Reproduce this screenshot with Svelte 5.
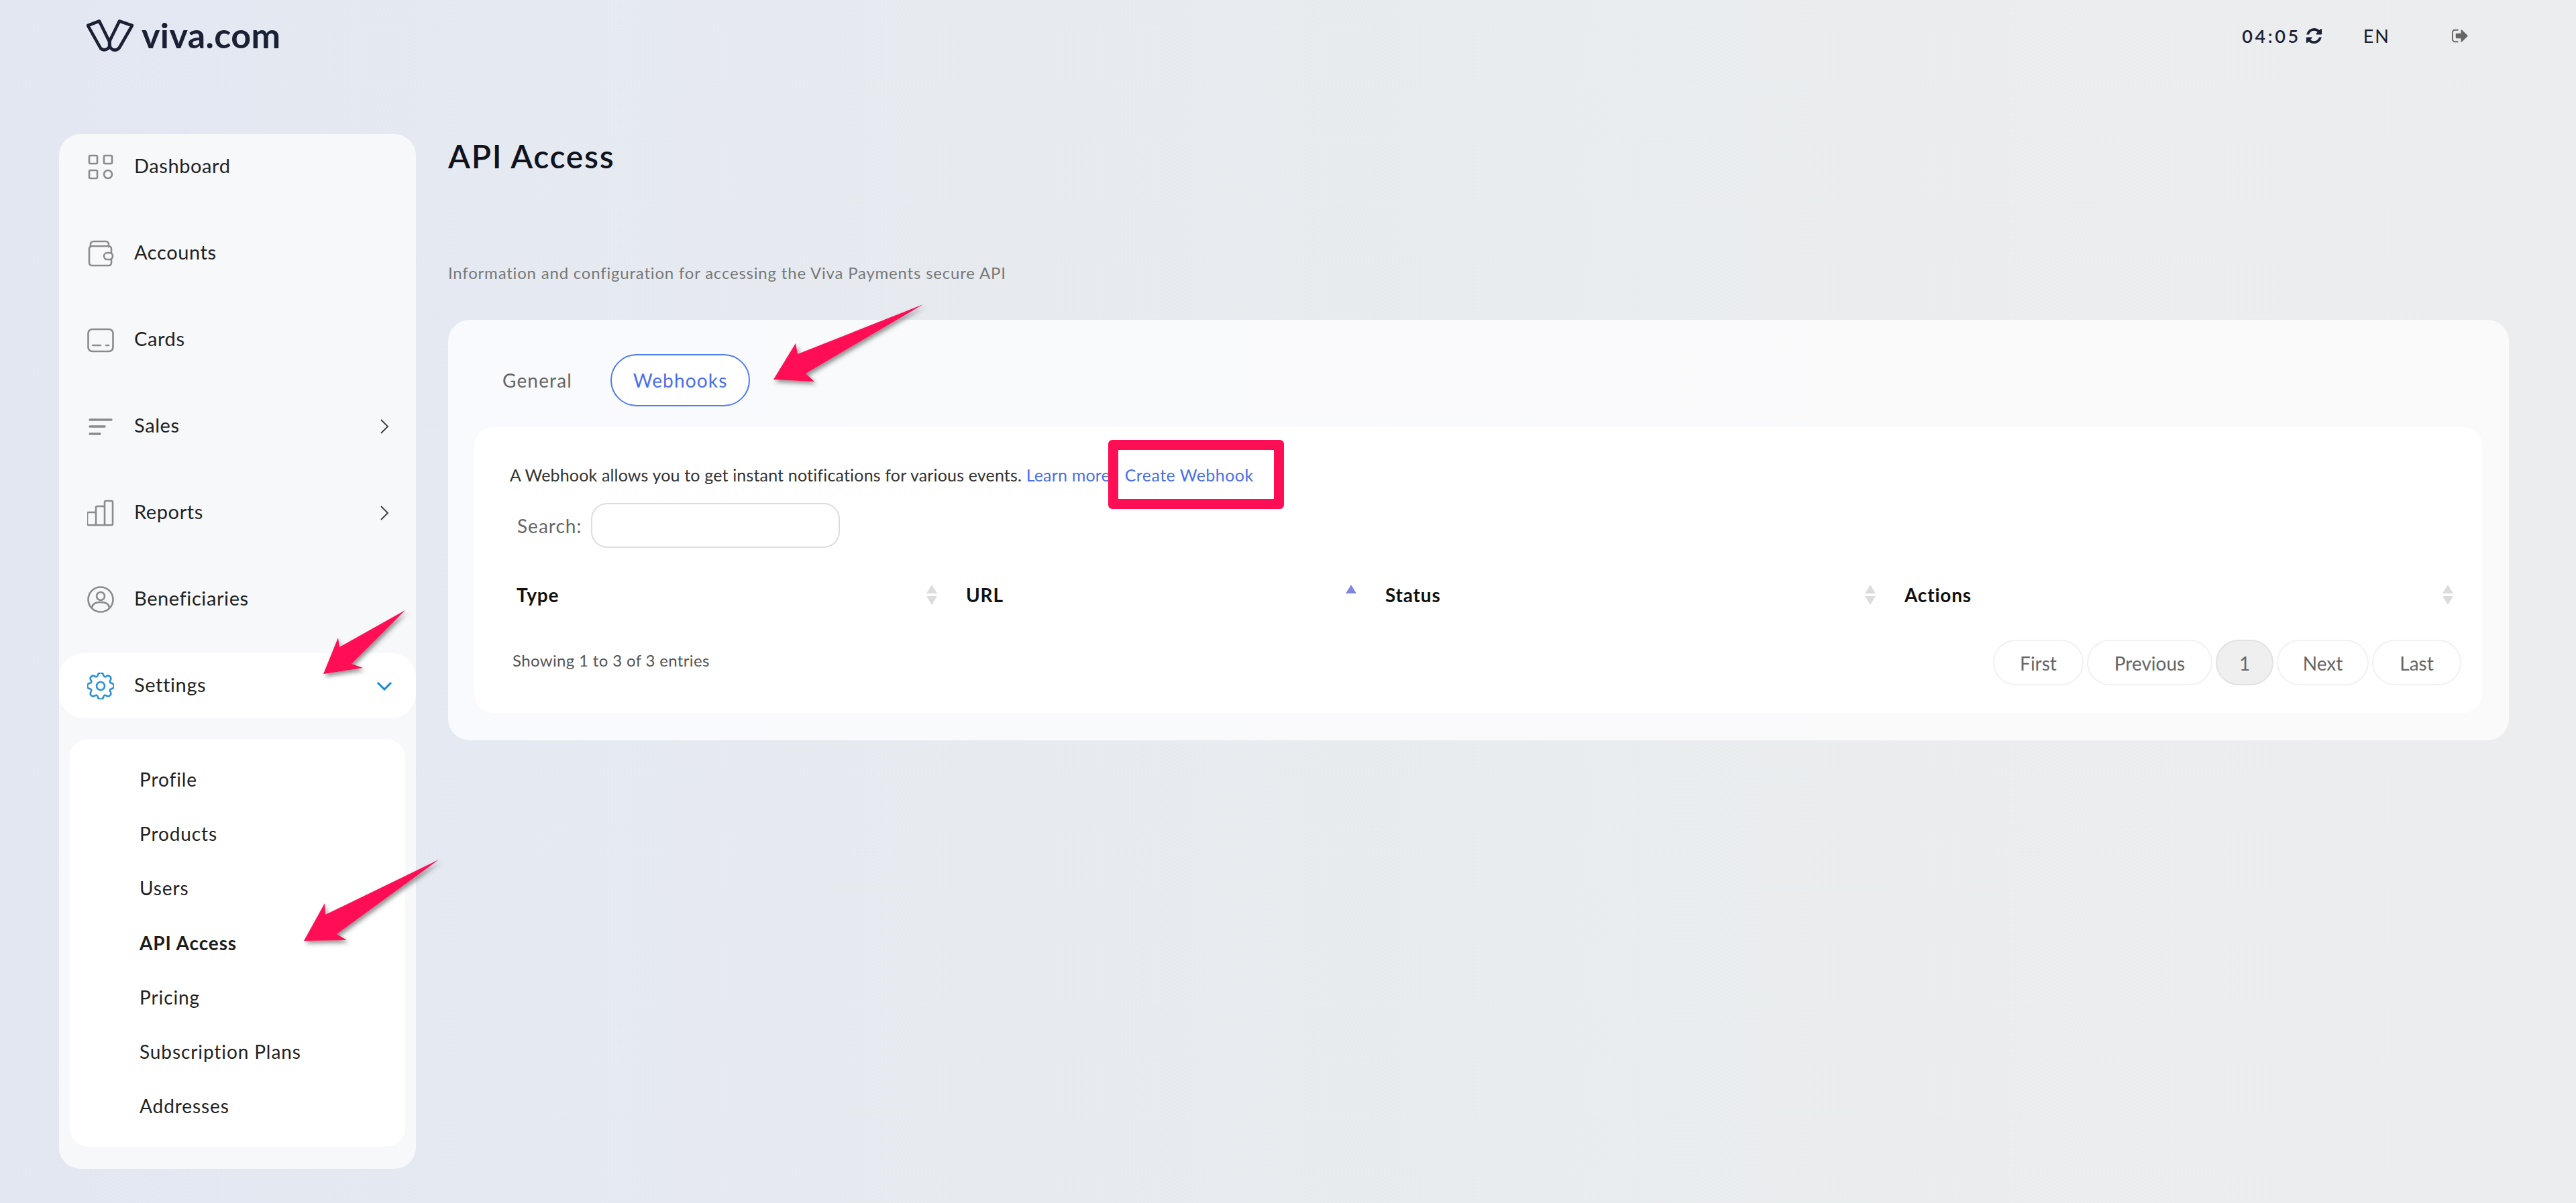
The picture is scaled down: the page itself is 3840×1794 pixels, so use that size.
<script>
  const gearPoints = [];
  const teeth = 8;
  for (let i = 0; i < teeth; i++) {
    const a = -Math.PI / 2 + (i * 2 * Math.PI) / teeth;
    const w = (9.5 * Math.PI) / 180;
    const v = Math.PI / teeth;
    [[a - w, 20.2], [a + w, 20.2], [a + v, 13.4]].forEach(([t, r]) => {
      gearPoints.push([20 + r * Math.cos(t), 20 + r * Math.sin(t)]);
    });
  }
  let gear = '';
  gearPoints.forEach((p, i) => {
    const n = gearPoints[(i + 1) % gearPoints.length];
    const nn = gearPoints[(i + 2) % gearPoints.length];
    if (i === 0) gear += `M${((p[0] + n[0]) / 2).toFixed(2)} ${((p[1] + n[1]) / 2).toFixed(2)}`;
    gear += `Q${n[0].toFixed(2)} ${n[1].toFixed(2)} ${((n[0] + nn[0]) / 2).toFixed(2)} ${((n[1] + nn[1]) / 2).toFixed(2)}`;
  });
  gear += 'Z';

  const subItems = ['Profile', 'Products', 'Users', 'API Access', 'Pricing', 'Subscription Plans', 'Addresses'];
  const columns = [
    { label: 'Type', cls: 'c1' },
    { label: 'URL', cls: 'c2', active: true },
    { label: 'Status', cls: 'c3' },
    { label: 'Actions', cls: 'c4' }
  ];
  const pages = [
    { label: 'First', w: 135 },
    { label: 'Previous', w: 187 },
    { label: '1', w: 86, current: true },
    { label: 'Next', w: 137 },
    { label: 'Last', w: 133 }
  ];
</script>

<div class="page">
  <header class="top">
    <div class="logo">
      <svg class="logo-mark" viewBox="0 0 70 48" fill="none" stroke="#1a2135" stroke-width="4.6" stroke-linejoin="round">
        <path d="M2 9 L19 2.5 L34 33 Q36 41 31 44 Q25 47 21 43 Z" />
        <path d="M49 2.5 L68 9 L49 42 Q45 47 39 45 Q32 41 35 31 Z" />
      </svg>
      <span class="logo-text">viva.com</span>
    </div>
    <div class="top-right">
      <span class="clock">04:05</span>
      <svg class="refresh" viewBox="0 0 1792 1792"><path fill="#1a2135" d="M1639 1056q0 5-1 7-64 268-268 434.5t-478 166.5q-146 0-282.5-55t-243.5-157l-129 129q-19 19-45 19t-45-19-19-45v-448q0-26 19-45t45-19h448q26 0 45 19t19 45-19 45l-137 137q71 66 161 102t187 36q134 0 250-65t186-179q11-17 53-117 8-23 30-23h192q13 0 22.5 9.5t9.5 22.5zm25-800v448q0 26-19 45t-45 19h-448q-26 0-45-19t-19-45 19-45l138-138q-148-137-349-137-134 0-250 65t-186 179q-11 17-53 117-8 23-30 23h-199q-13 0-22.5-9.5t-9.5-22.5v-7q65-268 270-434.5t480-166.5q146 0 284 55.5t245 156.5l130-129q19-19 45-19t45 19 19 45z" /></svg>
      <span class="lang">EN</span>
      <svg class="logout" viewBox="0 0 1792 1792"><path fill="#666" d="M704 1440q0 4 1 20t.5 26.5-3 23.5-10 19.5-20.5 6.5h-320q-119 0-203.5-84.5t-84.5-203.5v-704q0-119 84.5-203.5t203.5-84.5h320q13 0 22.5 9.5t9.5 22.5q0 4 1 20t.5 26.5-3 23.5-10 19.5-20.5 6.5h-320q-66 0-113 47t-47 113v704q0 66 47 113t113 47h312l11.5 1 11.5 3 8 5.5 7 9 2 13.5zm928-544q0 26-19 45l-544 544q-19 19-45 19t-45-19-19-45v-288h-448q-26 0-45-19t-19-45v-384q0-26 19-45t45-19h448v-288q0-26 19-45t45-19 45 19l544 544q19 19 19 45z" /></svg>
    </div>
  </header>

  <div class="body">
    <aside class="sidebar">
      <nav class="nav">
        <div class="row">
          <svg class="ico" viewBox="0 0 40 40"><rect x="3" y="3" width="12" height="12" rx="1.5" /><rect x="25" y="3" width="12" height="12" rx="1.5" /><rect x="3" y="25" width="12" height="12" rx="1.5" /><circle cx="31" cy="31" r="6" /></svg>
          <span class="lbl">Dashboard</span>
        </div>
        <div class="row">
          <svg class="ico" viewBox="0 0 40 40"><path d="M5 10V6a4 4 0 0 1 4-4h19a4 4 0 0 1 4 4v4" /><rect x="3" y="9" width="33" height="29" rx="4" /><rect x="25" y="19" width="13" height="10" rx="5" fill="#f6f8fa" /></svg>
          <span class="lbl">Accounts</span>
        </div>
        <div class="row">
          <svg class="ico" viewBox="0 0 40 40"><rect x="1.5" y="4" width="37" height="33" rx="6" /><path d="M8 28h12M28 28h4" /></svg>
          <span class="lbl">Cards</span>
        </div>
        <div class="row">
          <svg class="ico" viewBox="0 0 40 40"><path class="thick" d="M4 10h32M4 20h22M4 31h15" /></svg>
          <span class="lbl">Sales</span>
          <svg class="chev" viewBox="0 0 14 24"><path d="M2 2l10 10L2 22" /></svg>
        </div>
        <div class="row">
          <svg class="ico" viewBox="0 0 40 40"><path d="M0 21a2 2 0 0 1 2-2h9a2 2 0 0 1 2 2v17H2a2 2 0 0 1-2-2zM13 12a2 2 0 0 1 2-2h9a2 2 0 0 1 2 2v26H13zM26 4a2 2 0 0 1 2-2h8a2 2 0 0 1 2 2v32a2 2 0 0 1-2 2H26z" /></svg>
          <span class="lbl">Reports</span>
          <svg class="chev" viewBox="0 0 14 24"><path d="M2 2l10 10L2 22" /></svg>
        </div>
        <div class="row">
          <svg class="ico" viewBox="0 0 40 40"><circle cx="20" cy="20" r="18.5" /><circle cx="20" cy="15" r="6" /><path d="M7 32c1-6 6-8 13-8s12 2 13 8" /></svg>
          <span class="lbl">Beneficiaries</span>
        </div>
        <div class="row active">
          <svg class="ico gear" viewBox="0 0 40 40"><path d={gear} /><circle cx="20" cy="20" r="6" /></svg>
          <span class="lbl">Settings</span>
          <svg class="chev down" viewBox="0 0 24 14"><path d="M2 2l10 10L22 2" /></svg>
        </div>
      </nav>
      <ul class="sub">
        {#each subItems as item}
          <li class:current={item === 'API Access'}>{item}</li>
        {/each}
      </ul>
    </aside>

    <main class="main">
      <h1>API Access</h1>
      <p class="desc">Information and configuration for accessing the Viva Payments secure API</p>
      <section class="card">
        <div class="tabs">
          <span class="tab">General</span>
          <span class="tab pill">Webhooks</span>
        </div>
        <div class="inner">
          <p class="intro">A Webhook allows you to get instant notifications for various events. <a href="#top">Learn more</a>) <a class="create" href="#top">Create Webhook</a></p>
          <div class="search">
            <label for="q">Search:</label>
            <input id="q" type="text" />
          </div>
          <div class="thead">
            {#each columns as col}
              <div class="th {col.cls}">
                <span>{col.label}</span>
                <span class="sort" class:on={col.active}><i class="up"></i>{#if !col.active}<i class="dn"></i>{/if}</span>
              </div>
            {/each}
          </div>
          <div class="foot">
            <span class="info">Showing 1 to 3 of 3 entries</span>
            <div class="pager">
              {#each pages as p}
                <span class="pg" class:now={p.current} style="width:{p.w}px">{p.label}</span>
              {/each}
            </div>
          </div>
        </div>
      </section>
    </main>
  </div>

  <div class="redbox"></div>
  <svg class="arrows" viewBox="0 0 3840 1794">
    <defs>
      <filter id="ds" x="-20%" y="-20%" width="140%" height="140%">
        <feDropShadow dx="3" dy="4" stdDeviation="3" flood-color="#3a3a3a" flood-opacity="0.55" />
      </filter>
    </defs>
    <g fill="#ff0d55" filter="url(#ds)">
      <polygon points="1153,566 1186,512 1189,528 1376,454 1201,557 1214,569" />
      <polygon points="482,1005 504,951 506,965 604,910 524,990 541,996" />
      <polygon points="453,1403 484,1347 485,1364 654,1282 502,1393 517,1402" />
    </g>
  </svg>
</div>

<style>
  :global(body) {
    margin: 0;
  }
  .page {
    position: relative;
    width: 3840px;
    height: 1794px;
    overflow: hidden;
    background: linear-gradient(90deg, #e3e7f2 0%, #e6eaf0 30%, #e9ecee 60%, #ecedee 100%);
    font-family: Lato, "Noto Sans", sans-serif;
    color: #222;
  }
  .top {
    display: flex;
    justify-content: space-between;
    height: 106px;
    margin-bottom: 94px;
    padding: 0 159px 0 129px;
    align-items: center;
  }
  .logo {
    display: flex;
    align-items: center;
    gap: 12px;
  }
  .logo-mark {
    width: 70px;
    height: 48px;
  }
  .logo-text {
    font-size: 52px;
    font-weight: 700;
    color: #1a2135;
    line-height: 52px;
    letter-spacing: 0.4px;
    margin-top: -3px;
  }
  .top-right {
    display: flex;
    align-items: center;
    color: #1a2135;
  }
  .clock {
    font-size: 27px;
    font-weight: 600;
    letter-spacing: 3.6px;
  }
  .refresh {
    width: 27px;
    height: 27px;
    margin-left: 6px;
  }
  .lang {
    margin-left: 60px;
    font-size: 27px;
    letter-spacing: 2px;
  }
  .logout {
    width: 27px;
    height: 27px;
    margin-left: 91px;
  }
  .body {
    display: flex;
    gap: 48px;
    padding-left: 88px;
    align-items: flex-start;
  }
  .sidebar {
    width: 532px;
    height: 1543px;
    box-sizing: border-box;
    background: #f6f8fa;
    border-radius: 32px;
  }
  .nav {
    display: flex;
    flex-direction: column;
    gap: 32px;
  }
  .row {
    display: flex;
    align-items: center;
    height: 97px;
    padding: 0 36px 0 42px;
    border-radius: 36px;
    font-size: 29px;
  }
  .row.active {
    background: #fff;
  }
  .ico {
    width: 40px;
    height: 40px;
    flex: none;
    fill: none;
    stroke: #8b8b8b;
    stroke-width: 2.6;
    stroke-linecap: round;
    stroke-linejoin: round;
  }
  .ico .thick {
    stroke-width: 3.4;
  }
  .ico.gear {
    stroke: #2a8fd8;
  }
  .lbl {
    margin-left: 30px;
    margin-top: -4px;
    flex: 1;
    letter-spacing: 0.6px;
  }
  .chev {
    width: 14px;
    height: 24px;
    fill: none;
    stroke: #444;
    stroke-width: 2;
    margin-right: 4px;
  }
  .chev.down {
    width: 24px;
    height: 14px;
    stroke: #1a8ad0;
    stroke-width: 3;
    margin-right: -1px;
  }
  .sub {
    list-style: none;
    margin: 31px 16px 0;
    padding: 20px 0 18px 104px;
    height: 608px;
    box-sizing: border-box;
    background: #fff;
    border-radius: 28px;
    display: flex;
    flex-direction: column;
    font-size: 28px;
    letter-spacing: 0.9px;
  }
  .sub li {
    height: 81.2px;
    line-height: 80px;
  }
  .sub li.current {
    font-weight: 700;
    color: #1d1d1d;
  }
  .main {
    width: 3072px;
  }
  h1 {
    margin: 0;
    font-size: 48px;
    line-height: 66px;
    font-weight: 600;
    color: #10131c;
    letter-spacing: 1.7px;
  }
  .desc {
    margin: 124px 0 53px;
    font-size: 24px;
    line-height: 34px;
    color: #777;
    letter-spacing: 0.8px;
  }
  .card {
    box-sizing: border-box;
    height: 627px;
    padding: 51px 40px 41px 39px;
    border-radius: 32px;
    background: linear-gradient(90deg, #f9fafd, #fafafa);
  }
  .tabs {
    display: flex;
    align-items: center;
    gap: 15px;
    height: 78px;
    margin-bottom: 31px;
  }
  .tab {
    padding: 0 42px;
    font-size: 28px;
    letter-spacing: 1.15px;
    color: #666;
  }
  .pill {
    box-sizing: border-box;
    height: 78px;
    line-height: 74px;
    width: 208px;
    padding: 0;
    text-align: center;
    border: 2px solid #4f7df0;
    border-radius: 39px;
    color: #4a6fe8;
    background: #fff;
  }
  .inner {
    box-sizing: border-box;
    height: 426px;
    padding: 54px 40px 41px 53px;
    border-radius: 28px;
    background: #fff;
  }
  .intro {
    margin: 0;
    font-size: 25px;
    line-height: 34px;
    letter-spacing: 0.17px;
    color: #333;
  }
  .intro a {
    color: #4a6fe8;
    text-decoration: none;
  }
  .intro .create {
    margin-left: 9px;
    letter-spacing: 0.45px;
  }
  .search {
    display: flex;
    align-items: center;
    margin: 25px 0 0 11px;
    height: 67px;
    gap: 14px;
    color: #666;
    font-size: 28px;
    letter-spacing: 1px;
  }
  .search input {
    box-sizing: border-box;
    width: 371px;
    height: 67px;
    border: 2px solid #ddd;
    border-radius: 24px;
    background: #fff;
    outline: none;
  }
  .thead {
    display: grid;
    grid-template-columns: 670px 625px 774px 861px;
    height: 72px;
    margin-top: 34px;
  }
  .th {
    display: flex;
    align-items: center;
    justify-content: space-between;
    padding: 0 33px 0 10px;
    font-size: 28px;
    font-weight: 700;
    letter-spacing: 0.8px;
    color: #111;
  }
  .sort {
    display: flex;
    flex-direction: column;
    gap: 4px;
    width: 16px;
    height: 30px;
  }
  .sort i {
    display: block;
    width: 0;
    height: 0;
    border-left: 8px solid transparent;
    border-right: 8px solid transparent;
  }
  .sort .up {
    border-bottom: 13px solid #dcdcdc;
  }
  .sort .dn {
    border-top: 13px solid #dcdcdc;
  }
  .sort.on .up {
    border-bottom-color: #7f85e0;
  }
  .foot {
    display: flex;
    justify-content: space-between;
    align-items: center;
    height: 68px;
    margin-top: 31px;
    padding-left: 4px;
  }
  .info {
    margin-top: -8px;
    font-size: 24px;
    letter-spacing: 0.35px;
    color: #555;
  }
  .pager {
    display: flex;
    gap: 5px;
    margin-right: -9px;
  }
  .pg {
    box-sizing: border-box;
    height: 68px;
    line-height: 66px;
    text-align: center;
    border: 2px solid #f1f1f1;
    border-radius: 34px;
    font-size: 28px;
    color: #666;
    background: #fff;
  }
  .pg.now {
    background: #efefef;
    border-color: #e2e2e2;
  }
  .redbox {
    position: absolute;
    left: 1652px;
    top: 656px;
    width: 262px;
    height: 103px;
    box-sizing: border-box;
    border: 15px solid #ff0d55;
    border-radius: 6px;
  }
  .arrows {
    position: absolute;
    left: 0;
    top: 0;
    width: 3840px;
    height: 1794px;
    pointer-events: none;
  }
</style>
